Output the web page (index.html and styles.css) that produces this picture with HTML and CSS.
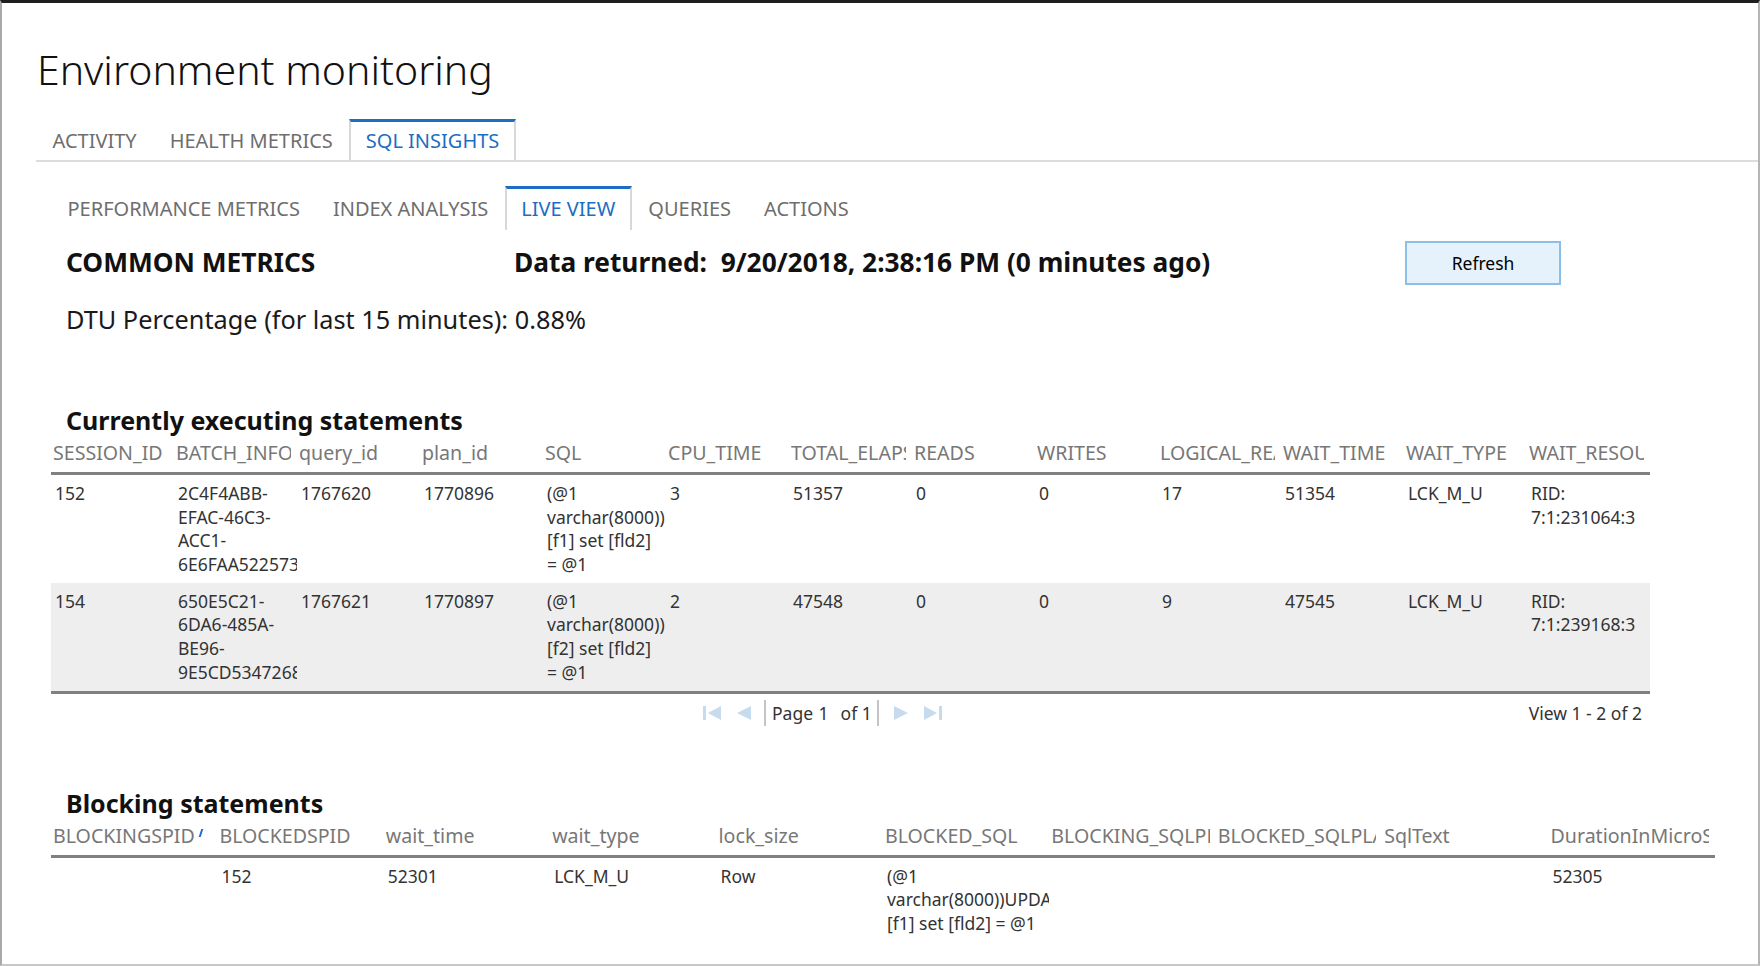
FILE: index.html
```html
<!DOCTYPE html>
<html lang="en">
<head>
<meta charset="utf-8">
<title>Environment monitoring</title>
<link rel="stylesheet" href="styles.css">
</head>
<body>
<div class="frame">
  <header class="page-head">
    <h1 class="title">Environment monitoring</h1>
    <nav class="tabs">
      <span class="tab">ACTIVITY</span>
      <span class="tab">HEALTH METRICS</span>
      <span class="tab active">SQL INSIGHTS</span>
    </nav>
  </header>

  <section class="panel">
    <nav class="tabs subtabs">
      <span class="tab">PERFORMANCE METRICS</span>
      <span class="tab">INDEX ANALYSIS</span>
      <span class="tab active">LIVE VIEW</span>
      <span class="tab">QUERIES</span>
      <span class="tab">ACTIONS</span>
    </nav>

    <div class="metrics-row">
      <h2 class="metrics-title">COMMON METRICS</h2>
      <h2 class="metrics-title">Data returned:&nbsp; 9/20/2018, 2:38:16 PM (0 minutes ago)</h2>
      <button class="refresh" type="button">Refresh</button>
    </div>

    <p class="dtu">DTU Percentage (for last 15 minutes): 0.88%</p>

    <h3 class="grid-title">Currently executing statements</h3>
    <table class="grid grid-exec">
      <thead>
        <tr>
          <th><span class="th-label">SESSION_ID</span></th>
          <th><span class="th-label">BATCH_INFO</span></th>
          <th><span class="th-label">query_id</span></th>
          <th><span class="th-label">plan_id</span></th>
          <th><span class="th-label">SQL</span></th>
          <th><span class="th-label">CPU_TIME</span></th>
          <th><span class="th-label">TOTAL_ELAPSED_TIME</span></th>
          <th><span class="th-label">READS</span></th>
          <th><span class="th-label">WRITES</span></th>
          <th><span class="th-label">LOGICAL_READS</span></th>
          <th><span class="th-label">WAIT_TIME</span></th>
          <th><span class="th-label">WAIT_TYPE</span></th>
          <th><span class="th-label">WAIT_RESOURCE</span></th>
        </tr>
      </thead>
      <tbody>
        <tr>
          <td>152</td><td>2C4F4ABB-EFAC-46C3-ACC1-6E6FAA522573</td><td>1767620</td><td>1770896</td>
          <td>(@1 varchar(8000))UPDATE [f1] set [fld2] = @1</td><td>3</td><td>51357</td><td>0</td><td>0</td>
          <td>17</td><td>51354</td><td>LCK_M_U</td><td>RID: 7:1:231064:3</td>
        </tr>
        <tr class="alt">
          <td>154</td><td>650E5C21-6DA6-485A-BE96-9E5CD5347268</td><td>1767621</td><td>1770897</td>
          <td>(@1 varchar(8000))UPDATE [f2] set [fld2] = @1</td><td>2</td><td>47548</td><td>0</td><td>0</td>
          <td>9</td><td>47545</td><td>LCK_M_U</td><td>RID: 7:1:239168:3</td>
        </tr>
      </tbody>
    </table>

    <div class="pager">
      <div class="pager-nav">
        <span class="pg-btn pg-first"><svg width="18" height="16" viewBox="0 0 18 16"><rect x="0" y="1" width="3" height="14" fill="#c6dbee"/><path d="M18 1 L5 8 L18 15 Z" fill="#c6dbee"/></svg></span>
        <span class="pg-btn pg-prev"><svg width="15" height="16" viewBox="0 0 15 16"><path d="M15 1 L1 8 L15 15 Z" fill="#c6dbee"/></svg></span>
        <span class="pg-sep"></span>
        <span class="pg-text">Page <span class="pg-input">1</span>of 1</span>
        <span class="pg-sep"></span>
        <span class="pg-btn pg-next"><svg width="15" height="16" viewBox="0 0 15 16"><path d="M0 1 L14 8 L0 15 Z" fill="#c6dbee"/></svg></span>
        <span class="pg-btn pg-last"><svg width="18" height="16" viewBox="0 0 18 16"><path d="M0 1 L13 8 L0 15 Z" fill="#c6dbee"/><rect x="15" y="1" width="3" height="14" fill="#c6dbee"/></svg></span>
      </div>
      <div class="pager-info">View 1 - 2 of 2</div>
    </div>

    <h3 class="grid-title grid-title-block">Blocking statements</h3>
    <table class="grid grid-block">
      <thead>
        <tr>
          <th><span class="th-label">BLOCKINGSPID <span class="sort-mark"></span></span></th>
          <th><span class="th-label">BLOCKEDSPID</span></th>
          <th><span class="th-label">wait_time</span></th>
          <th><span class="th-label">wait_type</span></th>
          <th><span class="th-label">lock_size</span></th>
          <th><span class="th-label">BLOCKED_SQL</span></th>
          <th><span class="th-label">BLOCKING_SQLPLAN</span></th>
          <th><span class="th-label">BLOCKED_SQLPLAN</span></th>
          <th><span class="th-label">SqlText</span></th>
          <th><span class="th-label">DurationInMicroSeconds</span></th>
        </tr>
      </thead>
      <tbody>
        <tr>
          <td></td><td>152</td><td>52301</td><td>LCK_M_U</td><td>Row</td>
          <td>(@1 varchar(8000))UPDATE [f1] set [fld2] = @1</td><td></td><td></td><td></td><td>52305</td>
        </tr>
      </tbody>
    </table>
  </section>
</div>
</body>
</html>
```
FILE: styles.css
```css
* { box-sizing: border-box; }

html, body {
  margin: 0;
  padding: 0;
  background: #ffffff;
}

body {
  font-family: "Noto Sans", "Open Sans", "Liberation Sans", sans-serif;
  font-stretch: 87.5%;
  color: #1a1a1a;
}

.frame {
  position: relative;
  width: 1760px;
  height: 966px;
  border-top: 3px solid #1e1e1e;
  border-left: 2px solid #a9a9a9;
  border-right: 2px solid #b5b5b5;
  border-bottom: 2px solid #c8c8c8;
  overflow: hidden;
}

.frame::before {
  content: "";
  position: absolute;
  top: -3px;
  left: -2px;
  width: 72px;
  height: 3px;
  background: #8a8a8a;
}

/* ---------- header ---------- */
.page-head {
  padding-left: 34px;
}

.title {
  margin: 40px 0 0 1px;
  font-size: 41px;
  line-height: 52px;
  font-weight: 300;
  color: #111;
}

.tabs {
  display: flex;
  margin-top: 24px;
  border-bottom: 2px solid #dcdcdc;
}

.tab {
  display: block;
  padding: 4px 16.5px 4px;
  border-top: 3px solid transparent;
  font-size: 20px;
  line-height: 30px;
  color: #6e6e6e;
  white-space: nowrap;
}

.tab.active {
  border-top-color: #1b6ec2;
  border-left: 2px solid #d8d8d8;
  border-right: 2px solid #d8d8d8;
  padding-left: 14.5px;
  padding-right: 14.5px;
  color: #1b6ec2;
}

.subtabs {
  border-bottom: none;
}

.subtabs .tab {
  padding-top: 5px;
  padding-bottom: 6px;
}

/* ---------- panel ---------- */
.panel {
  padding-left: 49px;
}

.metrics-row {
  display: grid;
  grid-template-columns: 448px 891px 156px;
  align-items: center;
  height: 44px;
  margin-top: 9px;
  padding-left: 15px;
}

.metrics-title {
  margin: 0;
  font-size: 26.3px;
  line-height: 34px;
  font-weight: 700;
  color: #111;
  white-space: nowrap;
}

.refresh {
  width: 156px;
  height: 44px;
  margin-top: 2px;
  background: #e5f1fb;
  border: 2px solid #8dbde9;
  font-family: inherit;
  font-stretch: 87.5%;
  font-size: 17.5px;
  color: #000;
  padding: 0;
}

.dtu {
  margin: 19px 0 0 15px;
  font-size: 25.3px;
  line-height: 34px;
  color: #1a1a1a;
}

.grid-title {
  margin: 67px 0 0 15px;
  font-size: 25px;
  line-height: 34px;
  font-weight: 700;
  color: #111;
}

.grid-title-block {
  margin-top: 54px;
}

/* ---------- grids ---------- */
.grid {
  margin-top: 2px;
  border-collapse: collapse;
  table-layout: fixed;
}

.grid-exec { width: 1599px; }
.grid-block { width: 1664px; }

.grid th {
  padding: 0 6px 5px 2px;
  font-size: 19.6px;
  line-height: 28px;
  font-weight: 400;
  color: #777;
  text-align: left;
  border-bottom: 3px solid #808080;
}

.th-label {
  display: block;
  white-space: nowrap;
  overflow: hidden;
}

.grid td {
  padding: 7px 2px 6.5px 4px;
  font-size: 17.5px;
  line-height: 23.6px;
  color: #333;
  vertical-align: top;
  overflow: hidden;
}

.grid-exec tbody tr:last-child td {
  border-bottom: 3px solid #808080;
}

.grid tr.alt td {
  background: #eeeeee;
}

.sort-mark {
  display: inline-block;
  width: 2px;
  height: 8px;
  vertical-align: 6px;
  background: #1b6ec2;
  transform: skewX(-18deg);
}

/* ---------- pager ---------- */
.pager {
  display: flex;
  align-items: center;
  width: 1599px;
  height: 38px;
}

.pager-nav {
  display: flex;
  align-items: center;
  margin-left: 652px;
}

.pg-btn {
  display: flex;
  align-items: center;
}

.pg-first { margin-right: 15px; }
.pg-prev { margin-right: 13px; }
.pg-next { margin-left: 15px; margin-right: 15px; }

.pg-sep {
  width: 2px;
  height: 26px;
  background: #c4c4c4;
}

.pg-text {
  padding: 0 5px 0 6px;
  font-size: 17.5px;
  line-height: 24px;
  color: #333;
  white-space: nowrap;
}

.pg-input {
  display: inline-block;
  margin: 0 12px 0 1px;
}

.pager-info {
  margin-left: auto;
  padding-right: 8px;
  font-size: 17.5px;
  color: #333;
}
```
